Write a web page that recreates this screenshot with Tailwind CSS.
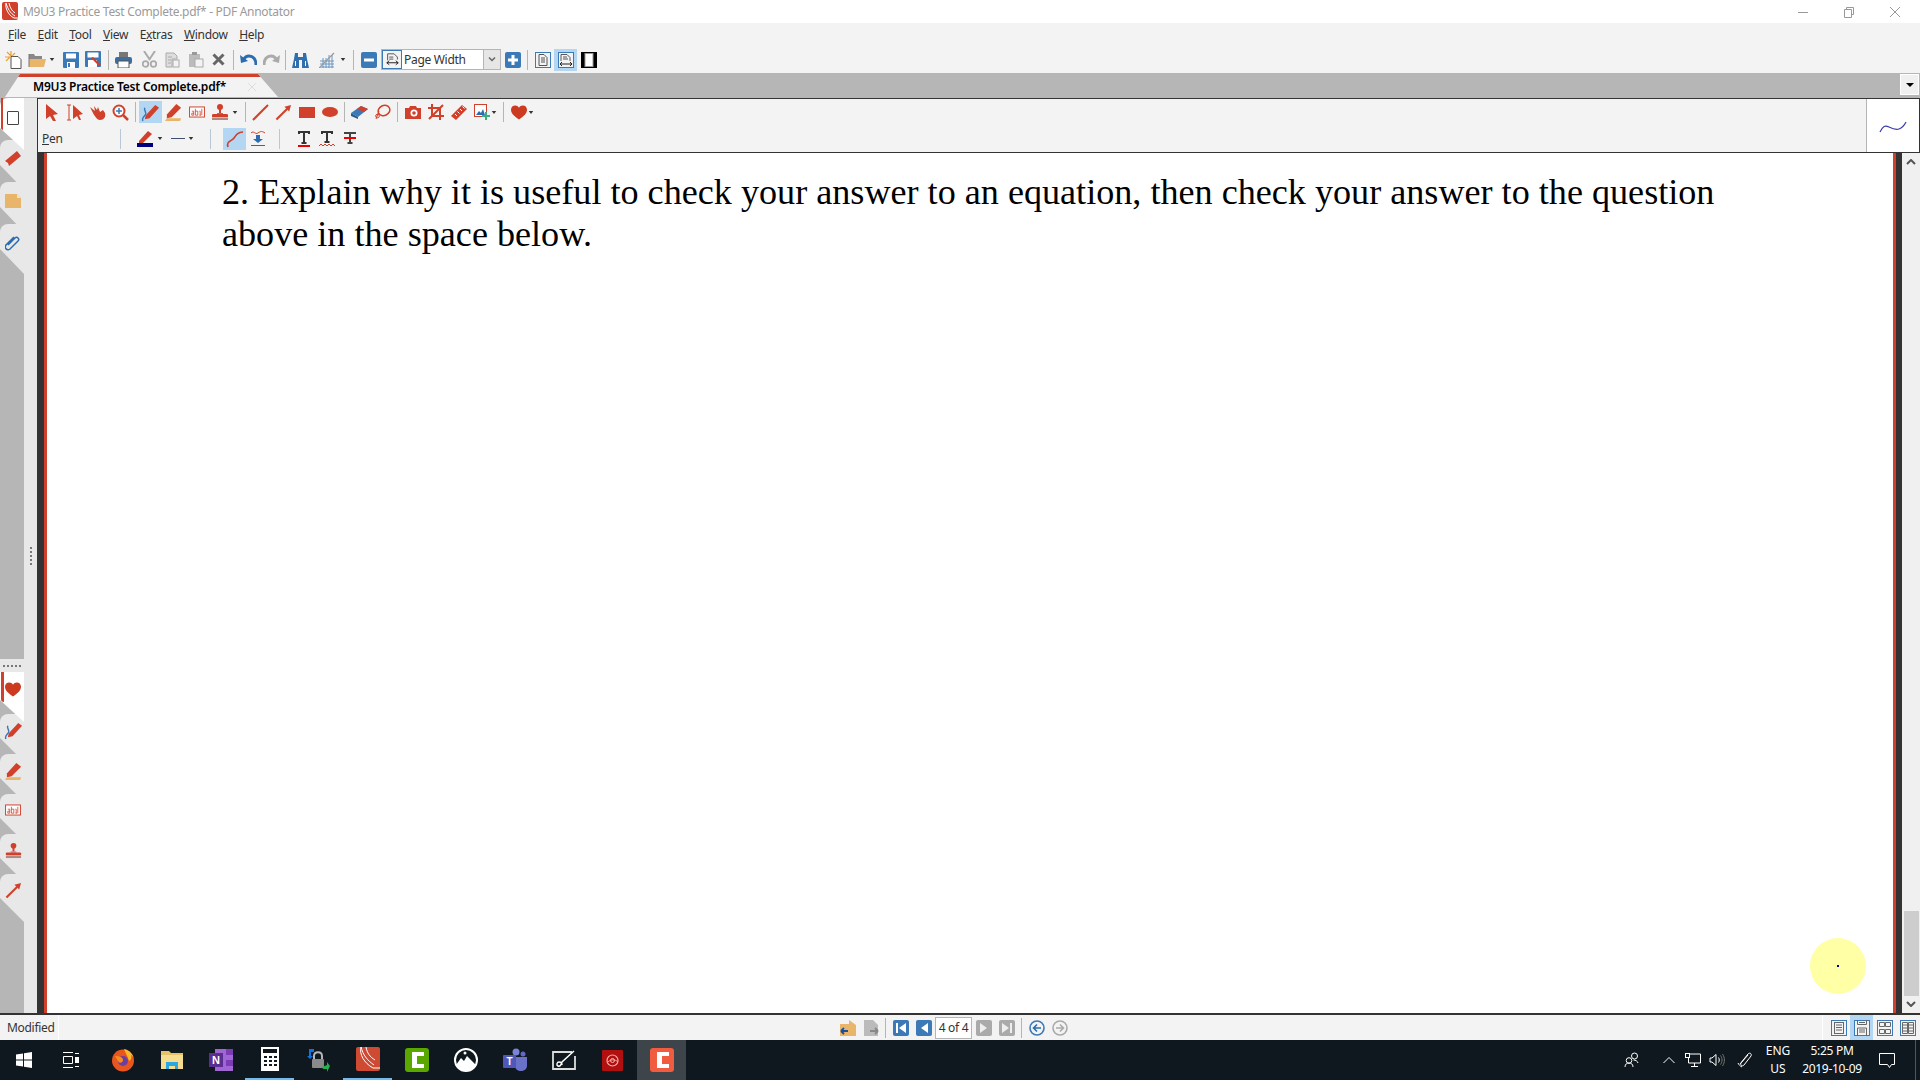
<!DOCTYPE html>
<html lang="en">
<head>
<meta charset="UTF-8">
<title>M9U3 Practice Test Complete.pdf* - PDF Annotator</title>
<script src="https://cdn.jsdelivr.net/npm/@tailwindcss/browser@4"></script>
</head>
<body class="overflow-hidden bg-white font-['Noto_Sans',sans-serif] text-[12px] tracking-[-0.3px] text-[#222]">
<!-- shared icons -->
<svg width="0" height="0" class="absolute">
  <symbol id="i-caret" viewBox="0 0 8 4"><path d="M1 0h6L4 4z" fill="#333"/></symbol>
  <symbol id="i-pen" viewBox="0 0 20 20"><path d="M5 13L15 2l4 3L9 16l-5 1z" fill="#d0402b"/><path d="M2 19c-2-4 3-5 3-8s-2-3-1-6" fill="none" stroke="#3c79b7" stroke-width="1.5"/></symbol>
  <symbol id="i-hl" viewBox="0 0 20 20"><path d="M3 12L13 1l5 4L8 15l-5 1z" fill="#d0402b"/><path d="M3 16l-2 3h16l1-3z" fill="#e9b56a"/></symbol>
  <symbol id="i-text" viewBox="0 0 20 14"><rect x=".7" y=".7" width="18.6" height="12.6" fill="#fff" stroke="#d0402b" stroke-width="1.2"/><path d="M3.5 6h2.4v5H3.5V8.500h2.400M8 3v8h3V6H8M13 6h1v5m-1 0h2M16 3v8" fill="none" stroke="#d0402b"/></symbol>
  <symbol id="i-stamp" viewBox="0 0 18 18"><circle cx="9" cy="4" r="3" fill="#d0402b"/><rect x="8" y="6" width="2" height="4" fill="#d0402b"/><path d="M6 10h6v1H6z" fill="#d94f9b"/><path d="M1 12c0-1 1-1 2-1h12c1 0 2 0 2 1v2H1z" fill="#d0402b"/><rect x="1" y="14.5" width="16" height="2.5" fill="#b08a80"/></symbol>
  <symbol id="i-arrow" viewBox="0 0 18 18"><path d="M1.500 16.500L13 5" stroke="#d0402b" stroke-width="2.2"/><path d="M17 1l-7 2 5 5z" fill="#d0402b"/></symbol>
  <symbol id="i-heart" viewBox="0 0 16 15"><path d="M8 14.500C3 11 0 8.500 0 4.800 0 2 2 .5 4.200 .5 5.800 .5 7.200 1.300 8 2.800 8.800 1.300 10.200 .5 11.800 .5 14 .5 16 2 16 4.800 16 8.500 13 11 8 14.500z" fill="#cc3a20"/></symbol>
  <symbol id="i-pageline" viewBox="0 0 16 16"><rect x=".5" y=".5" width="15" height="15" fill="#f3f3f3" stroke="#3c79b7"/><path d="M5 5h6M5 7.500h6M5 10h6" stroke="#666"/><rect x="3.5" y="2.500" width="9" height="11" fill="none" stroke="#666"/></symbol>
</svg>

<div class="flex flex-col h-screen">
  <!-- title bar -->
  <div class="h-[23px] flex items-center bg-white text-[#9a9a9a] shrink-0">
    <svg class="ml-[2px] mt-[-1px]" width="16" height="18" viewBox="0 0 16 18"><rect width="16" height="18" rx="2" fill="#d0402b"/><path d="M4 1c2 6 4 10 9 13M7 1c1 5 3 8 6 10M4 1c-1 5 2 12 8 15h4" fill="none" stroke="#fff"/></svg>
    <span class="ml-[5px] text-[12px] whitespace-nowrap">M9U3 Practice Test Complete.pdf* - PDF Annotator</span>
    <div class="ml-auto flex items-center">
      <svg class="w-[46px]" height="12" viewBox="0 0 46 12"><path d="M18 6.500h10" stroke="#999"/></svg>
      <svg class="w-[46px]" height="12" viewBox="0 0 46 12"><path d="M18.500 3.500h7v8h-7zM20.500 3.500V1.500h7v7h-2" fill="none" stroke="#999"/></svg>
      <svg class="w-[46px]" height="12" viewBox="0 0 46 12"><path d="M18 1l10 10M28 1L18 11" stroke="#999"/></svg>
      <span class="w-[2px]"></span>
    </div>
  </div>
  <!-- menu -->
  <div class="h-[23px] flex items-center bg-[#f3f3f3] shrink-0 pl-[8px] gap-[11.5px] text-[#333]">
    <span><u>F</u>ile</span><span><u>E</u>dit</span><span><u>T</u>ool</span><span><u>V</u>iew</span><span>E<u>x</u>tras</span><span><u>W</u>indow</span><span><u>H</u>elp</span>
  </div>
  <!-- main toolbar -->
  <div class="h-[27px] flex items-center bg-[#f3f3f3] shrink-0 pl-[2px]">
    <span class="w-[23px] flex justify-center"><svg width="18" height="18" viewBox="0 0 18 18"><path d="M6 5.500h7l3 3v9H6z" fill="#fff" stroke="#555"/><path d="M6 0v5M2 1l4 4M0 6h6M1 10l4-4M10 2L7 5" stroke="#e9a13c" stroke-width="1.2"/></svg></span>
    <span class="w-[23px] flex justify-center"><svg width="18" height="16" viewBox="0 0 18 16"><path d="M1 2h5l1 2h7v3H1z" fill="#888"/><path d="M1 15V7h17l-2 8z" fill="#e9b56a"/><path d="M1 2v13" stroke="#777"/></svg></span>
    <span class="w-[8px] flex justify-center"><svg width="6" height="3"><use href="#i-caret"/></svg></span>
    <span class="w-[23px] ml-[3px] flex justify-center"><svg width="16" height="16" viewBox="0 0 16 16"><rect width="16" height="16" rx="1" fill="#3c79b7"/><rect x="3" y="1.500" width="10" height="5" fill="#fff"/><rect x="4" y="10" width="8" height="6" fill="#fff"/><rect x="5" y="11" width="2" height="4" fill="#3c79b7"/></svg></span>
    <span class="w-[23px] flex justify-center"><svg width="17" height="17" viewBox="0 0 17 17"><rect width="16" height="16" rx="1" fill="#3c79b7"/><rect x="2.500" y="1.500" width="11" height="5" fill="#fff"/><rect x="3" y="9" width="9" height="7" fill="#fff"/><path d="M6 7l8 8 2-1-8-8z" fill="#d0402b"/></svg></span>
    <span class="w-[7px] flex justify-center"><span class="w-px h-[20px] bg-[#b5b5b5]"></span></span>
    <span class="w-[23px] flex justify-center"><svg width="17" height="16" viewBox="0 0 17 16"><rect x="4" y="0" width="9" height="5" fill="#777"/><rect x="0" y="5" width="17" height="7" rx="2" fill="#3d6f9e"/><rect x="3" y="9" width="11" height="7" fill="#fff" stroke="#555"/></svg></span>
    <span class="w-[23px] ml-[3px] flex justify-center"><svg width="15" height="17" viewBox="0 0 15 17"><path d="M2 0l6 9M13 0L7 9" stroke="#aaa" stroke-width="2"/><circle cx="3.500" cy="13" r="2.800" fill="none" stroke="#aaa" stroke-width="1.8"/><circle cx="11.500" cy="13" r="2.800" fill="none" stroke="#aaa" stroke-width="1.8"/></svg></span>
    <span class="w-[23px] flex justify-center"><svg width="16" height="16" viewBox="0 0 16 16"><path d="M1 1h8l3 3v3H7v8H1z" fill="#ddd" stroke="#aaa"/><path d="M3 5h4M3 8h3M3 11h3" stroke="#aaa"/><rect x="8" y="8" width="6" height="7" fill="#f3f3f3" stroke="#aaa"/></svg></span>
    <span class="w-[23px] flex justify-center"><svg width="16" height="16" viewBox="0 0 16 16"><rect x="1" y="2" width="11" height="13" fill="#bbb"/><rect x="4" y="0" width="5" height="3" fill="#999"/><rect x="7" y="7" width="8" height="8" fill="#f3f3f3" stroke="#aaa"/></svg></span>
    <span class="w-[23px] flex justify-center"><svg width="13" height="13" viewBox="0 0 13 13"><path d="M1.500 1.500l10 10M11.500 1.500l-10 10" stroke="#666" stroke-width="3"/></svg></span>
    <span class="w-[7px] flex justify-center"><span class="w-px h-[20px] bg-[#b5b5b5]"></span></span>
    <span class="w-[23px] flex justify-center"><svg width="17" height="13" viewBox="0 0 17 13"><path d="M16 12c0-6-3-9-7-9-2 0-4 1-5 3" fill="none" stroke="#2b6cb0" stroke-width="3"/><path d="M0 2l1 8 7-2z" fill="#2b6cb0"/></svg></span>
    <span class="w-[23px] flex justify-center"><svg width="17" height="13" viewBox="0 0 17 13"><path d="M1 12c0-6 3-9 7-9 2 0 4 1 5 3" fill="none" stroke="#aaa" stroke-width="3"/><path d="M17 2l-1 8-7-2z" fill="#aaa"/></svg></span>
    <span class="w-[7px] ml-[-1px] flex justify-center"><span class="w-px h-[20px] bg-[#b5b5b5]"></span></span>
    <span class="w-[23px] flex justify-center"><svg width="17" height="16" viewBox="0 0 17 16"><path d="M3 1h3v4h5V1h3l1 6 2 9h-7V8H7v8H0l2-9z" fill="#2f6fad"/><path d="M3.500 9v5M13.500 9v5" stroke="#fff"/></svg></span>
    <span class="w-[23px] ml-[3px] flex justify-center"><svg width="16" height="16" viewBox="0 0 16 16"><path d="M1 15h14M1 12h14M1 9h14M4 6v10M7 6v10M10 3v13M13 3v13" stroke="#5b8fc2" stroke-width=".9"/><path d="M0 16L15 1" stroke="#999" stroke-width="1.2"/></svg></span>
    <span class="w-[8px] ml-[1px] flex justify-center"><svg width="6" height="3"><use href="#i-caret"/></svg></span>
    <span class="w-[7px] ml-[3px] flex justify-center"><span class="w-px h-[20px] bg-[#b5b5b5]"></span></span>
    <span class="w-[23px] flex justify-center"><svg width="16" height="16" viewBox="0 0 16 16"><rect width="16" height="16" rx="2" fill="#3c79b7"/><rect x="3" y="6.500" width="10" height="3" fill="#fff"/></svg></span>
    <!-- zoom combo -->
    <div class="ml-[1px] w-[120px] h-[21px] flex bg-white border border-[#b5b5b5]">
      <span class="w-[20px] h-[19px] flex items-center justify-center border border-[#3c79b7] bg-[#f3f3f3]"><svg width="13" height="13" viewBox="0 0 16 16"><path d="M2 1h8l4 4v3M2 1v8M4 5h5M4 7.500h5" fill="none" stroke="#555" stroke-width="1.2"/><path d="M1 12h14M1 12l3-2.500M1 12l3 2.500M15 12l-3-2.500M15 12l-3 2.500" fill="none" stroke="#222" stroke-width="1.2"/></svg></span>
      <span class="pl-[2px] leading-[19px] text-[12px] text-[#333] flex-1 whitespace-nowrap">Page Width</span>
      <span class="w-[17px] flex items-center justify-center bg-[#e6e6e6] border-l border-[#b5b5b5]"><svg width="8" height="5" viewBox="0 0 8 5"><path d="M1 .5l3 3 3-3" fill="none" stroke="#666" stroke-width="1.5"/></svg></span>
    </div>
    <span class="w-[23px] flex justify-center"><svg width="16" height="16" viewBox="0 0 16 16"><rect width="16" height="16" rx="2" fill="#3c79b7"/><path d="M3 6.500h3.500V3h3v3.500H13v3H9.500V13h-3V9.500H3z" fill="#fff"/></svg></span>
    <span class="w-[7px] flex justify-center"><span class="w-px h-[20px] bg-[#b5b5b5]"></span></span>
    <span class="w-[23px] flex justify-center"><svg width="16" height="16" viewBox="0 0 16 16"><rect x=".5" y=".5" width="15" height="15" fill="#f3f3f3" stroke="#3c79b7"/><path d="M4 2.500h5l3 3v8H4zM6 6h4M6 8h4M6 10h4" fill="none" stroke="#555"/></svg></span>
    <span class="w-[23px] h-[22px] flex justify-center items-center bg-[#b3d7f2]"><svg width="16" height="16" viewBox="0 0 16 16"><rect x=".5" y=".5" width="15" height="15" fill="#f3f3f3" stroke="#3c79b7"/><path d="M3 9V2.500h6l3 3V9M5 5h4M5 7h5" fill="none" stroke="#555"/><path d="M2 12h12M2 12l2-2M2 12l2 2M14 12l-2-2M14 12l-2 2" fill="none" stroke="#222"/></svg></span>
    <span class="w-[23px] flex justify-center"><svg width="16" height="16" viewBox="0 0 16 16"><rect width="16" height="16" fill="#000"/><rect x="4" y="1.500" width="8" height="13" fill="#fff" stroke="#999"/></svg></span>
  </div>
  <!-- tab strip -->
  <div class="h-[25px] flex bg-[#b6b6b6] shrink-0 pt-px">
    <div class="ml-[5px] w-[273px] h-[23px] bg-[#f3f3f3] border-t-[3px] border-[#d0402b] flex items-center [clip-path:polygon(0_100%,15px_0,253px_0,273px_100%)]">
      <span class="ml-[28px] font-semibold text-[12px] tracking-[-0.2px] text-black whitespace-nowrap">M9U3 Practice Test Complete.pdf*</span>
      <svg class="ml-auto mr-[22px]" width="8" height="8" viewBox="0 0 8 8"><path d="M0 0l8 8M8 0L0 8" stroke="#ddd"/></svg>
    </div>
    <div class="ml-auto mr-px w-[19px] h-[21px] bg-[#f0f0f0] border border-white flex items-center justify-center"><svg width="8" height="4" viewBox="0 0 8 4"><path d="M0 0h8L4 4z" fill="#000"/></svg></div>
  </div>

  <div class="flex-1 flex min-h-0">
    <!-- left side tabs -->
    <div class="w-[37px] shrink-0 bg-[#e8e8e8] flex relative">
      <div class="w-[24px] bg-[#b6b6b6] flex flex-col">
        <div class="relative z-40 h-[52px] mb-[-10px] bg-white rounded-tl-[8px] [clip-path:polygon(0_0,100%_0,100%_100%,0_30px)] flex justify-center pt-[13px]">
          <span class="absolute left-[1px] top-0 w-[2px] h-[32px] bg-[#d0402b] rounded-bl"></span>
          <span class="w-[12px] h-[14px] ml-[2px] border-[1.5px] border-[#444] rounded-[1px]"></span>
        </div>
        <div class="relative z-30 h-[50px] mb-[-8px] bg-[#e8e8e8] rounded-tl-[8px] [clip-path:polygon(0_0,100%_0,100%_100%,0_25px)] flex justify-center pt-[11px] pl-[2px]">
          <svg width="16" height="16" viewBox="0 0 16 16"><path d="M0 10L12 0l4 5L4 15l-1-3z" fill="#d0402b"/></svg>
        </div>
        <div class="relative z-20 h-[50px] mb-[-8px] bg-[#e8e8e8] rounded-tl-[8px] [clip-path:polygon(0_0,100%_0,100%_100%,0_25px)] flex justify-center pt-[12px] pl-[2px]">
          <svg width="16" height="14" viewBox="0 0 16 14"><path d="M0 0h12l4 4v10H0z" fill="#e9b56a"/><path d="M12 0l4 4h-4z" fill="#f6e0bd"/></svg>
        </div>
        <div class="relative z-10 h-[50px] bg-[#e8e8e8] rounded-tl-[8px] [clip-path:polygon(0_0,100%_0,100%_100%,0_25px)] flex justify-center pt-[11px] pl-[2px]">
          <svg width="17" height="16" viewBox="0 0 17 16"><path d="M3 10l7-7c2-2 5 1 3 3l-8 8c-3 2-6-1-4-4l8-8" fill="none" stroke="#2b6cb0" stroke-width="1.5"/></svg>
        </div>
        <div class="mt-auto bg-[#e8e8e8] h-[13px] flex items-center justify-center gap-[2px]">
          <span class="w-[2px] h-[2px] bg-[#777]"></span><span class="w-[2px] h-[2px] bg-[#777]"></span><span class="w-[2px] h-[2px] bg-[#777]"></span><span class="w-[2px] h-[2px] bg-[#777]"></span><span class="w-[2px] h-[2px] bg-[#777]"></span>
        </div>
        <div class="relative z-40 h-[50px] mb-[-8px] bg-white [clip-path:polygon(0_0,100%_0,100%_100%,0_28px)] flex justify-center pt-[10px] pl-[2px]">
          <span class="absolute left-[1px] top-0 w-[3px] h-[30px] bg-[#d0402b] rounded-bl"></span>
          <svg width="16" height="15"><use href="#i-heart"/></svg>
        </div>
        <div class="relative z-30 h-[48px] mb-[-8px] bg-[#e8e8e8] rounded-tl-[8px] [clip-path:polygon(0_0,100%_0,100%_100%,0_24px)] flex justify-center pt-[7px] pl-[2px]">
          <svg width="19" height="19"><use href="#i-pen"/></svg>
        </div>
        <div class="relative z-20 h-[48px] mb-[-8px] bg-[#e8e8e8] rounded-tl-[8px] [clip-path:polygon(0_0,100%_0,100%_100%,0_24px)] flex justify-center pt-[8px] pl-[2px]">
          <svg width="19" height="19"><use href="#i-hl"/></svg>
        </div>
        <div class="relative z-10 h-[48px] mb-[-8px] bg-[#e8e8e8] rounded-tl-[8px] [clip-path:polygon(0_0,100%_0,100%_100%,0_24px)] flex justify-center pt-[10px] pl-[2px]">
          <svg width="16" height="12"><use href="#i-text"/></svg>
        </div>
        <div class="relative z-[5] h-[48px] mb-[-8px] bg-[#e8e8e8] rounded-tl-[8px] [clip-path:polygon(0_0,100%_0,100%_100%,0_24px)] flex justify-center pt-[8px] pl-[2px]">
          <svg width="17" height="17"><use href="#i-stamp"/></svg>
        </div>
        <div class="relative z-[1] h-[48px] mb-[91px] bg-[#e8e8e8] rounded-tl-[8px] [clip-path:polygon(0_0,100%_0,100%_100%,0_24px)] flex justify-center pt-[8px] pl-[2px]">
          <svg width="17" height="17"><use href="#i-arrow"/></svg>
        </div>
      </div>
      <div class="flex-1 flex flex-col items-center justify-center gap-[2px]">
        <span class="w-[2px] h-[2px] bg-[#777]"></span><span class="w-[2px] h-[2px] bg-[#777]"></span><span class="w-[2px] h-[2px] bg-[#777]"></span><span class="w-[2px] h-[2px] bg-[#777]"></span><span class="w-[2px] h-[2px] bg-[#777]"></span>
      </div>
    </div>

    <div class="flex-1 flex flex-col min-w-0">
      <!-- tool panel -->
      <div class="h-[55px] shrink-0 flex border border-[#333] bg-[#f3f3f3]">
        <div class="flex-1 flex flex-col">
          <div class="h-[26px] flex items-center pl-[2px]">
            <span class="w-[23px] flex justify-center"><svg width="14" height="17" viewBox="0 0 14 17"><path d="M1 0l12 10-5 1 3 6-3 0-3-5-4 3z" fill="#d0402b"/></svg></span>
            <span class="w-[23px] flex justify-center"><svg width="18" height="17" viewBox="0 0 18 17"><path d="M1 1h4M1 16h4M3 1v15" stroke="#d0402b"/><path d="M7 1l10 9-4 1 2 5-2 0-2-4-4 3z" fill="#d0402b"/></svg></span>
            <span class="w-[23px] flex justify-center"><svg width="17" height="16" viewBox="0 0 17 16"><path d="M1 3l5 4-1-5 3 4 1-3 2 5 3-2 2 3c1 4-1 7-5 7-3 0-4-3-6-5z" fill="#d0402b"/></svg></span>
            <span class="w-[23px] flex justify-center"><svg width="17" height="17" viewBox="0 0 17 17"><circle cx="7" cy="7" r="5.500" fill="#fff" stroke="#d0402b" stroke-width="2"/><path d="M11 11l5 5" stroke="#d0402b" stroke-width="2.5"/><path d="M4 7h6M7 4v6" stroke="#3c79b7" stroke-width="1.5"/></svg></span>
            <span class="w-[7px] flex justify-center"><span class="w-px h-[20px] bg-[#b5b5b5]"></span></span>
            <span class="w-[23px] h-[22px] flex justify-center items-center bg-[#b3d7f2]"><svg width="19" height="19"><use href="#i-pen"/></svg></span>
            <span class="w-[23px] flex justify-center"><svg width="19" height="19"><use href="#i-hl"/></svg></span>
            <span class="w-[23px] flex justify-center"><svg width="16" height="12"><use href="#i-text"/></svg></span>
            <span class="w-[23px] flex justify-center"><svg width="18" height="18"><use href="#i-stamp"/></svg></span>
            <span class="w-[8px] flex justify-center"><svg width="6" height="3"><use href="#i-caret"/></svg></span>
            <span class="w-[7px] ml-[3px] flex justify-center"><span class="w-px h-[20px] bg-[#b5b5b5]"></span></span>
            <span class="w-[23px] flex justify-center"><svg width="17" height="17" viewBox="0 0 17 17"><path d="M1 16L16 1" stroke="#d0402b" stroke-width="2"/></svg></span>
            <span class="w-[23px] flex justify-center"><svg width="17" height="17"><use href="#i-arrow"/></svg></span>
            <span class="w-[23px] flex justify-center"><span class="w-[16px] h-[11px] bg-[#d0402b]"></span></span>
            <span class="w-[23px] flex justify-center"><span class="w-[16px] h-[10px] bg-[#d0402b] rounded-[50%]"></span></span>
            <span class="w-[7px] flex justify-center"><span class="w-px h-[20px] bg-[#b5b5b5]"></span></span>
            <span class="w-[23px] flex justify-center"><svg width="17" height="14" viewBox="0 0 17 14"><path d="M0 8l10-7 7 3-10 8z" fill="#3c79b7"/><path d="M0 8l7 4 0 2-7-3z" fill="#2b5c8e"/><path d="M10 1l7 3-4 3-7-3z" fill="#d0402b"/></svg></span>
            <span class="w-[23px] flex justify-center"><svg width="17" height="16" viewBox="0 0 17 16"><ellipse cx="10" cy="6.500" rx="6" ry="5" fill="none" stroke="#d0402b" stroke-width="1.5" transform="rotate(-25 10 6.500)"/><circle cx="3.500" cy="12" r="1.800" fill="none" stroke="#d0402b"/><path d="M2 15l3-8" stroke="#d0402b"/></svg></span>
            <span class="w-[7px] flex justify-center"><span class="w-px h-[20px] bg-[#b5b5b5]"></span></span>
            <span class="w-[23px] flex justify-center"><svg width="16" height="14" viewBox="0 0 16 14"><path d="M0 3h4l1-2h6l1 2h4v11H0z" fill="#d0402b"/><circle cx="9" cy="8" r="3.500" fill="#fff"/><circle cx="9" cy="8" r="1.800" fill="#d0402b"/></svg></span>
            <span class="w-[23px] flex justify-center"><svg width="16" height="16" viewBox="0 0 16 16"><path d="M4 0v12h12M0 4h12v12M1 15L15 1" fill="none" stroke="#d0402b" stroke-width="2"/></svg></span>
            <span class="w-[23px] flex justify-center"><svg width="16" height="16" viewBox="0 0 16 16"><path d="M0 12L11 1l5 4L5 16z" fill="#d0402b"/><path d="M4 10l2 2M6.500 7.500l2 2M9 5l2 2M11.500 2.500l2 2" stroke="#fff"/></svg></span>
            <span class="w-[23px] flex justify-center"><svg width="16" height="16" viewBox="0 0 16 16"><rect x=".5" y=".5" width="12" height="12" fill="#fff" stroke="#d0402b"/><path d="M2 11l3-4 2 2 2-4 2 6z" fill="#2b6cb0"/><path d="M12 8v8M8 12h8" stroke="#3dac7f" stroke-width="2"/></svg></span>
            <span class="w-[8px] ml-[-3px] flex justify-center"><svg width="6" height="3"><use href="#i-caret"/></svg></span>
            <span class="w-[7px] ml-[2px] flex justify-center"><span class="w-px h-[20px] bg-[#b5b5b5]"></span></span>
            <span class="w-[23px] flex justify-center"><svg width="16" height="15"><use href="#i-heart"/></svg></span>
            <span class="w-[8px] ml-[-3px] flex justify-center"><svg width="6" height="3"><use href="#i-caret"/></svg></span>
          </div>
          <div class="h-[27px] flex items-center pl-[4px]">
            <span class="w-[78px] text-[#333]"><u>P</u>en</span>
            <span class="w-px h-[20px] bg-[#b8c8d8]"></span>
            <span class="w-[23px] ml-[12px] flex justify-center"><svg width="16" height="17" viewBox="0 0 16 17"><path d="M2 11L11 1l4 3-9 9-4 1z" fill="#d0402b"/><rect y="13" width="16" height="4" fill="#00007f"/></svg></span>
            <span class="w-[8px] flex justify-center"><svg width="6" height="3"><use href="#i-caret"/></svg></span>
            <span class="w-[14px] h-px ml-[7px] bg-[#3f4f6f]"></span>
            <span class="w-[8px] ml-[2px] flex justify-center"><svg width="6" height="3"><use href="#i-caret"/></svg></span>
            <span class="w-px h-[20px] ml-[15px] bg-[#b8c8d8]"></span>
            <span class="w-[23px] h-[22px] ml-[12px] flex justify-center items-center bg-[#b3d7f2]"><svg width="18" height="18" viewBox="0 0 18 18"><path d="M2 17c-2-6 4-6 6-9s4-6 9-6" fill="none" stroke="#d0402b" stroke-width="1.6"/></svg></span>
            <span class="w-[23px] flex justify-center"><svg width="16" height="17" viewBox="0 0 16 17"><path d="M1 3c3-3 4 2 7 0s4-2 7 0" fill="none" stroke="#d0402b"/><path d="M6 5h4v4h3l-5 4-5-4h3z" fill="#2b6cb0"/><path d="M1 15.500h14" stroke="#2b6cb0"/></svg></span>
            <span class="w-px h-[20px] ml-[10px] bg-[#b8c8d8]"></span>
            <span class="w-[23px] ml-[12px] flex justify-center"><svg width="12" height="16" viewBox="0 0 12 16"><path d="M1 3V1h10v2M6 1v11M3.500 12h5" fill="none" stroke="#333" stroke-width="2"/><rect y="14" width="12" height="2" fill="#e00"/></svg></span>
            <span class="w-[23px] flex justify-center"><svg width="16" height="16" viewBox="0 0 16 16"><path d="M3 3V1h10v2M8 1v10M5.500 11h5" fill="none" stroke="#333" stroke-width="2"/><path d="M0 15l2-2 2 2 2-2 2 2 2-2 2 2 2-2 2 2" fill="none" stroke="#d0402b"/></svg></span>
            <span class="w-[23px] flex justify-center"><svg width="12" height="13" viewBox="0 0 12 13"><path d="M1 2V1h10v1M6 1v10M3.500 11h5" fill="none" stroke="#444" stroke-width="2"/><rect y="5" width="12" height="2" fill="#e00"/></svg></span>
          </div>
        </div>
        <div class="w-[53px] bg-white border-l border-[#b5b5b5] flex items-center justify-center">
          <svg width="28" height="14" viewBox="0 0 28 14"><path d="M1 13c3-6 5-7 9-5s7 3 10 2 5-3 7-7" fill="none" stroke="#3a3aa8" stroke-width="1.2"/></svg>
        </div>
      </div>
      <!-- page -->
      <div class="flex-1 flex min-h-0 relative">
        <div class="w-[7px] bg-[#333] shrink-0"></div>
        <div class="w-[3px] bg-[#d0402b] shrink-0"></div>
        <div class="flex-1 bg-white pl-[175px] pt-[18px] font-['Liberation_Serif',serif] text-[36.15px] tracking-normal leading-[42px] text-black whitespace-nowrap">
          2. Explain why it is useful to check your answer to an equation, then check your answer to the question<br>above in the space below.
        </div>
        <div class="absolute left-[1773px] top-[785px] w-[56px] h-[56px] rounded-full bg-[#ffffa6] flex items-center justify-center"><span class="w-[2px] h-[2px] bg-[#00007f]"></span></div>
        <div class="w-[3px] bg-[#d0402b] shrink-0"></div>
        <div class="w-[6px] bg-[#333] shrink-0"></div>
        <div class="w-[18px] shrink-0 bg-[#f0f0f0] flex flex-col items-center">
          <div class="h-[18px] flex items-center"><svg width="10" height="6" viewBox="0 0 10 6"><path d="M1 5l4-4 4 4" fill="none" stroke="#555" stroke-width="2"/></svg></div>
          <div class="mt-[741px] h-[88px] w-[15px] bg-[#cdcdcd]"></div>
          <div class="mt-auto h-[18px] flex items-center"><svg width="10" height="6" viewBox="0 0 10 6"><path d="M1 1l4 4 4-4" fill="none" stroke="#555" stroke-width="2"/></svg></div>
        </div>
      </div>
    </div>
  </div>

  <!-- status bar -->
  <div class="h-[27px] shrink-0 bg-[#f3f3f3] border-t-2 border-[#333] flex items-center text-[#333]">
    <span class="w-[59px] pl-[7px] border-r border-white h-full leading-[25px]">Modified</span>
    <span class="ml-[777px] w-[23px] flex justify-center"><svg width="16" height="16" viewBox="0 0 16 16"><path d="M0 4h9V0l7 5v11H0z" fill="#e9b56a"/><path d="M1 11h7M1 11l3-3M1 11l3 3" fill="none" stroke="#1b4f9e" stroke-width="1.8"/></svg></span>
    <span class="w-[23px] flex justify-center"><svg width="16" height="16" viewBox="0 0 16 16"><path d="M1 0h9l5 5v11H1z" fill="#bbb"/><path d="M7 11h8M15 11l-3-3M15 11l-3 3" fill="none" stroke="#888" stroke-width="1.8"/></svg></span>
    <span class="w-[7px] flex justify-center"><span class="w-px h-[20px] bg-[#b5b5b5]"></span></span>
    <span class="w-[23px] flex justify-center"><svg width="16" height="16" viewBox="0 0 16 16"><rect width="16" height="16" rx="2" fill="#3c79b7"/><path d="M3 3h2v10H3zM13 3v10L6 8z" fill="#fff"/></svg></span>
    <span class="w-[23px] flex justify-center"><svg width="16" height="16" viewBox="0 0 16 16"><rect width="16" height="16" rx="2" fill="#3c79b7"/><path d="M12 3v10L5 8z" fill="#fff"/></svg></span>
    <span class="w-[37px] h-[22px] bg-white border border-[#b5b5b5] text-center leading-[20px] text-[#333] whitespace-nowrap">4 of 4</span>
    <span class="w-[23px] flex justify-center"><svg width="16" height="16" viewBox="0 0 16 16"><rect width="16" height="16" rx="2" fill="#aaa"/><path d="M4 3v10l7-5z" fill="#eee"/></svg></span>
    <span class="w-[23px] flex justify-center"><svg width="16" height="16" viewBox="0 0 16 16"><rect width="16" height="16" rx="2" fill="#aaa"/><path d="M11 3h2v10h-2zM3 3v10l7-5z" fill="#eee"/></svg></span>
    <span class="w-[7px] flex justify-center"><span class="w-px h-[20px] bg-[#b5b5b5]"></span></span>
    <span class="w-[23px] flex justify-center"><svg width="16" height="16" viewBox="0 0 16 16"><circle cx="8" cy="8" r="7" fill="#f3f3f3" stroke="#3c79b7" stroke-width="1.6"/><path d="M12 8H5M8 4.500L4.500 8 8 11.500" fill="none" stroke="#2b6cb0" stroke-width="1.6"/></svg></span>
    <span class="w-[23px] flex justify-center"><svg width="16" height="16" viewBox="0 0 16 16"><circle cx="8" cy="8" r="7" fill="#f3f3f3" stroke="#aaa" stroke-width="1.6"/><path d="M4 8h7M8 4.500L11.500 8 8 11.500" fill="none" stroke="#aaa" stroke-width="1.6"/></svg></span>
    <span class="ml-auto w-px h-full bg-white"></span>
    <span class="ml-[4px] w-[23px] h-full flex justify-center items-center"><svg width="16" height="16"><use href="#i-pageline"/></svg></span>
    <span class="w-[23px] h-full flex justify-center items-center bg-[#b3d7f2]"><svg width="16" height="16" viewBox="0 0 16 16"><rect x=".5" y=".5" width="15" height="15" fill="#f3f3f3" stroke="#3c79b7"/><path d="M3.500 0v4.500h9V0M3.500 16v-8h9v8M5 2.500h6M5 10h6M5 12h6" fill="none" stroke="#666"/></svg></span>
    <span class="w-[23px] h-full flex justify-center items-center"><svg width="16" height="16" viewBox="0 0 16 16"><rect x=".5" y=".5" width="15" height="15" fill="#f3f3f3" stroke="#3c79b7"/><path d="M2.500 2.500h5v4h-5zM8.500 2.500h5v4h-5zM2.500 9.500h5v4h-5zM8.500 9.500h5v4h-5z" fill="none" stroke="#666"/></svg></span>
    <span class="w-[23px] h-full flex justify-center items-center mr-[1px]"><svg width="16" height="16" viewBox="0 0 16 16"><rect x=".5" y=".5" width="15" height="15" fill="#f3f3f3" stroke="#3c79b7"/><path d="M2.500 2.500h5v11h-5zM8.500 2.500h5v11h-5zM3 5h4M3 8h4M3 11h4M9 5h4M9 8h4M9 11h4" fill="none" stroke="#666"/></svg></span>
  </div>

  <!-- taskbar -->
  <div class="h-[40px] shrink-0 bg-[#0e181e] flex text-white tracking-normal">
    <span class="w-[48px] flex items-center justify-center"><svg width="16" height="16" viewBox="0 0 16 16"><path d="M0 2.500l7-1v6H0zM8 1.300L16 0v7.500H8zM0 8.500h7v6l-7-1zM8 8.500h8V16l-8-1.300z" fill="#fff"/></svg></span>
    <span class="w-[50px] pr-[4px] flex items-center justify-center"><svg width="16" height="16" viewBox="0 0 16 16"><path d="M0 .5h10M0 15.500h10M.5 4.500h9v7h-9z" fill="none" stroke="#fff"/><path d="M12 1h4v1h-4zM12 5h4v6h-4zM12 14h4v1h-4z" fill="#fff"/></svg></span>
    <span class="w-[49px] flex items-center justify-center"><svg width="24" height="24" viewBox="0 0 24 24"><circle cx="12" cy="12.500" r="11" fill="#e8561f"/><path d="M13 1c6 1 10 6 10 12 0-3-1-5-3-6 1 3 0 5-2 6-1-4-3-7-5-12z" fill="#fbb829"/><circle cx="12" cy="13" r="5" fill="#6b3fa0"/><path d="M4 8c4 0 8 1 8 4s-4 4-5 1" fill="#f48c1f"/></svg></span>
    <span class="w-[49px] flex items-center justify-center"><svg width="22" height="18" viewBox="0 0 22 18"><path d="M0 0h8l2 2h12v16H0z" fill="#e5c268"/><path d="M0 4h22v14H0z" fill="#f5dc8e"/><path d="M5 18v-7h12v7h-3v-3H8v3z" fill="#2aa7e0"/></svg></span>
    <span class="w-[49px] flex items-center justify-center"><svg width="24" height="22" viewBox="0 0 24 22"><path d="M6 0h18v22H6z" fill="#a066d3"/><path d="M17 0h7v6h-7zM17 11h7v6h-7z" fill="#7d3cb5"/><rect y="4" width="14" height="14" fill="#5b2d91"/><text x="7" y="15" text-anchor="middle" font-family="Liberation Sans" font-weight="700" font-size="11" fill="#fff">N</text></svg></span>
    <span class="w-[49px] flex items-center justify-center border-b-2 border-[#76b9ed]"><svg width="18" height="24" viewBox="0 0 18 24"><rect width="18" height="24" fill="#fff"/><rect x="2" y="2" width="14" height="4" fill="#0e181e"/><path d="M3 9h3v2H3zM8 9h3v2H8zM13 9h3v2h-3zM3 13h3v2H3zM8 13h3v2H8zM13 13h3v2h-3zM3 17h3v2H3zM8 17h3v2H8zM13 17h3v2h-3z" fill="#0e181e"/></svg></span>
    <span class="w-[49px] flex items-center justify-center"><svg width="23" height="23" viewBox="0 0 23 23"><path d="M2 0h5v3H4v5H2z" fill="#1273de"/><path d="M0 7l3 3 3-3z" fill="#1273de"/><rect x="5" y="10" width="12" height="9" rx="1" fill="#8a8a8a"/><path d="M7 10V7c0-5 8-5 8 0v3" fill="none" stroke="#b5b5b5" stroke-width="2"/><path d="M15 18l5-2v-3l3 4-3 6v-3l-4 0z" fill="#22b14c"/></svg></span>
    <span class="w-[49px] flex items-center justify-center border-b-2 border-[#76b9ed]"><svg width="24" height="24" viewBox="0 0 24 24"><rect width="24" height="24" rx="2" fill="#cf4a32"/><path d="M5 0c2 8 6 13 13 18M10 0c1 6 4 10 9 13M5 0c-2 7 3 16 12 21h7" fill="none" stroke="#fff"/></svg></span>
    <span class="w-[49px] flex items-center justify-center"><svg width="24" height="24" viewBox="0 0 24 24"><rect width="24" height="24" rx="3" fill="#5aa700"/><path d="M7 4h12v4h-7v8h7v4H7z" fill="#fff"/></svg></span>
    <span class="w-[49px] flex items-center justify-center"><svg width="24" height="24" viewBox="0 0 24 24"><circle cx="12" cy="12" r="11" fill="none" stroke="#fff" stroke-width="2"/><path d="M2 17l5-7 3 3 3-5 9 9c-2 4-6 6-10 6s-8-2-10-6z" fill="#fff"/><circle cx="11" cy="5" r="1.500" fill="#fff"/></svg></span>
    <span class="w-[49px] flex items-center justify-center"><svg width="24" height="24" viewBox="0 0 24 24"><circle cx="13" cy="4" r="3.500" fill="#7b83d6"/><circle cx="20" cy="6" r="2.500" fill="#5f68c4"/><path d="M10 9h14v9c0 3-3 5-6 5s-6-2-6-5z" fill="#6a71c8"/><rect y="7" width="13" height="13" rx="1" fill="#4f58b8"/><text x="6.500" y="17" text-anchor="middle" font-family="Liberation Sans" font-weight="700" font-size="10" fill="#fff">T</text></svg></span>
    <span class="w-[49px] flex items-center justify-center"><svg width="24" height="20" viewBox="0 0 24 20"><path d="M20 2H1v17h22V6" fill="none" stroke="#ddd" stroke-width="1.8"/><path d="M22 1L10 12c-1 3-2 5-4 4s-1-4 1-4 3 1 3 3" fill="none" stroke="#fff" stroke-width="1.4"/></svg></span>
    <span class="w-[49px] flex items-center justify-center"><svg width="21" height="21" viewBox="0 0 21 21"><rect width="21" height="21" rx="1" fill="#b10f10"/><circle cx="10.500" cy="10.500" r="5.500" fill="none" stroke="#f3b0a8" stroke-width="1.2"/><circle cx="10.500" cy="10.500" r="2" fill="none" stroke="#f3b0a8"/><path d="M5 13c3-4 8-4 11-1" fill="none" stroke="#f3b0a8"/></svg></span>
    <span class="w-[49px] flex items-center justify-center bg-[#3d454b]"><svg width="24" height="24" viewBox="0 0 24 24"><rect width="24" height="24" rx="3" fill="#f15b40"/><path d="M7 4h12v4h-7v8h7v4H7z" fill="#fff"/></svg></span>
    <div class="ml-auto flex items-center mr-[4px]">
      <svg width="16" height="16" viewBox="0 0 16 16"><circle cx="10.500" cy="4" r="3" fill="none" stroke="#fff"/><circle cx="5" cy="8.500" r="2.800" fill="none" stroke="#fff"/><path d="M1 15c0-3 2-4 4-4s4 1 4 4M9.500 8c2 0 4 1 4.500 3" fill="none" stroke="#fff"/></svg>
      <svg class="ml-[23px]" width="12" height="8" viewBox="0 0 12 8"><path d="M.5 7L6 1.500 11.500 7" fill="none" stroke="#fff"/></svg>
      <svg class="ml-[10px]" width="16" height="14" viewBox="0 0 16 14"><path d="M3.500 1H15.500v9H3.500zM9.500 10v3M6 13.500h7" fill="none" stroke="#fff"/><rect x=".5" y=".5" width="4" height="4" fill="#0e181e" stroke="#fff"/></svg>
      <svg class="ml-[8px]" width="16" height="14" viewBox="0 0 16 14"><path d="M1 5h2l4-3.500v11L3 9H1zM9.500 4.500c1 1.500 1 3.500 0 5" fill="none" stroke="#fff"/><path d="M11.500 2.500c2 2.500 2 6.500 0 9M13.500 1c2.500 3.500 2.500 8.500 0 12" fill="none" stroke="#777"/></svg>
      <svg class="ml-[12px]" width="16" height="16" viewBox="0 0 16 16"><path d="M3 12l8-10c2-2 4 0 3 2L7 13c-2 2-4 0-3-2l7-8" fill="none" stroke="#fff"/><path d="M1 11c1 2 2 3 4 4" fill="none" stroke="#fff"/></svg>
      <div class="ml-[7px] w-[36px] text-center leading-[18px] text-[12px]"><div>ENG</div><div>US</div></div>
      <div class="ml-[6px] w-[60px] text-center leading-[18px] text-[12px] tracking-[-0.3px] whitespace-nowrap"><div>5:25 PM</div><div>2019-10-09</div></div>
      <svg class="ml-[17px]" width="16" height="15" viewBox="0 0 16 15"><path d="M.5 .5h15v11h-3l-2 3-2-3h-8z" fill="none" stroke="#fff"/></svg>
      <span class="ml-[20px] w-px h-[40px] bg-[#555]"></span>
    </div>
  </div>
</div>
</body>
</html>
